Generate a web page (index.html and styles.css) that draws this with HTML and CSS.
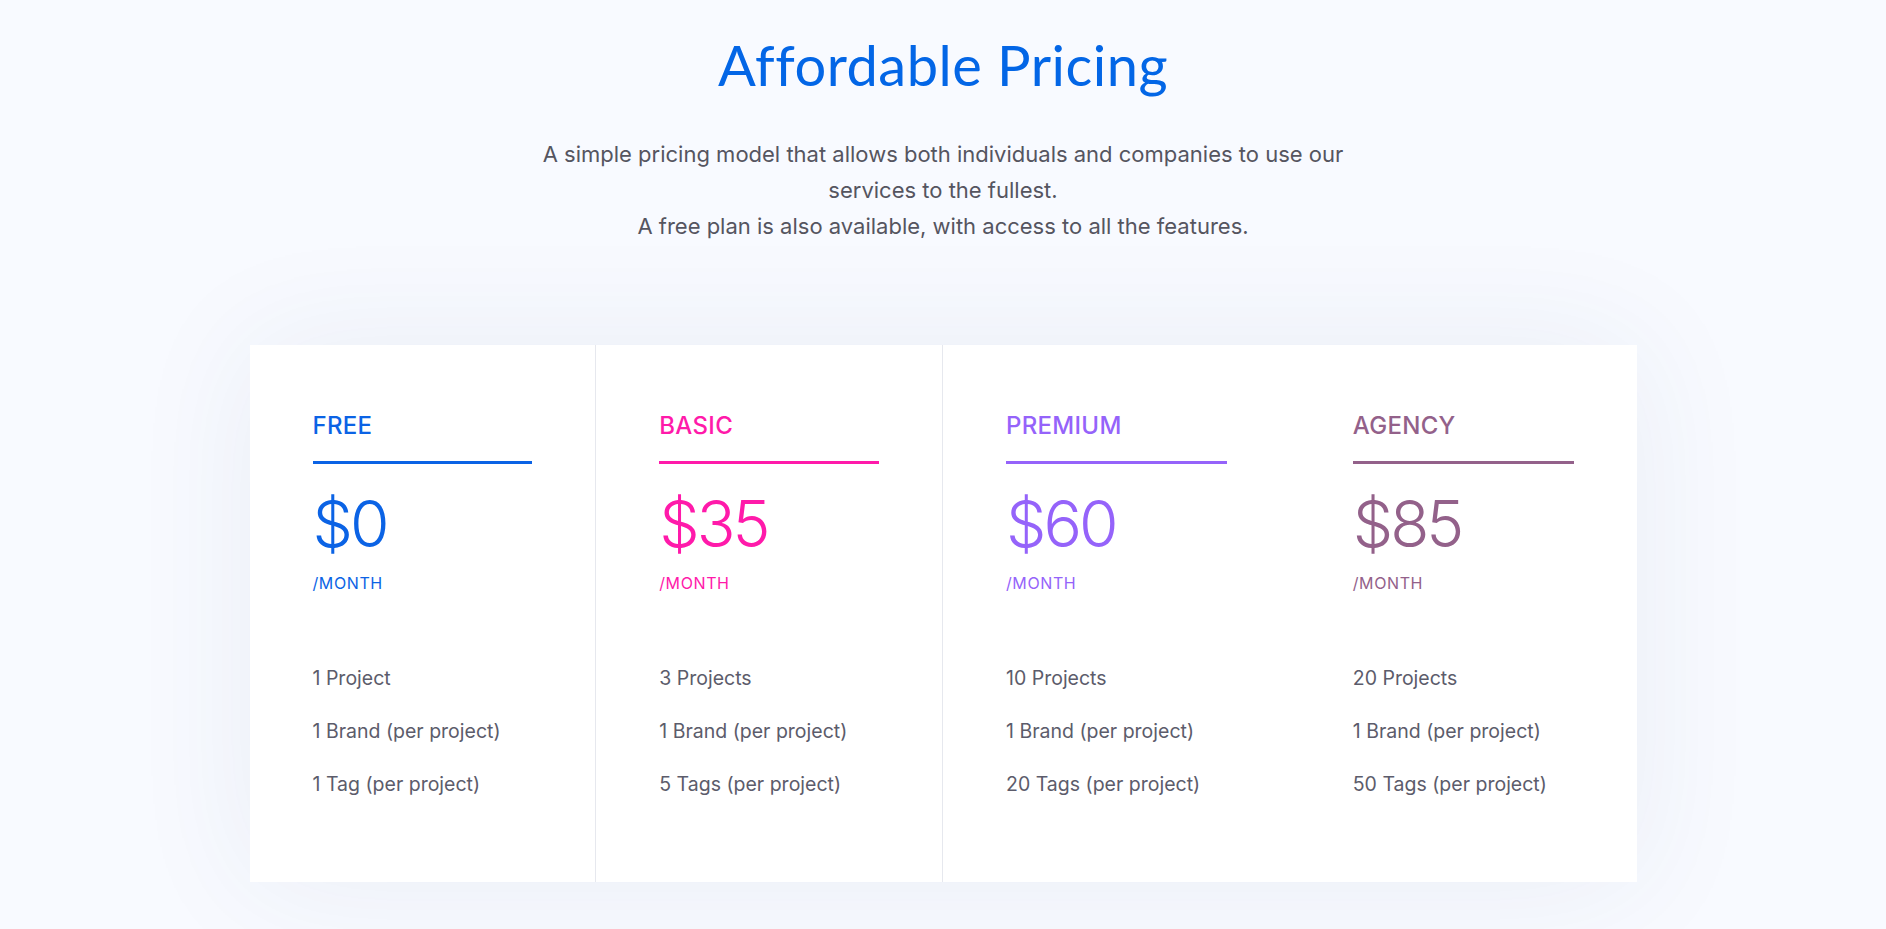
FILE: index.html
```html
<!DOCTYPE html>
<html lang="en">
<head>
<meta charset="utf-8">
<title>Affordable Pricing</title>
<link rel="stylesheet" href="styles.css">
</head>
<body>
<section class="pricing">
  <header class="intro">
    <h1 class="title">Affordable Pricing</h1>
    <p class="lead">A simple pricing model that allows both individuals and companies to use our services to the fullest.<br>A free plan is also available, with access to all the features.</p>
  </header>
  <div class="plans">
    <div class="plan plan-free">
      <h2 class="plan-name">FREE</h2>
      <div class="rule"></div>
      <div class="price">$0</div>
      <div class="period">/MONTH</div>
      <ul class="features">
        <li>1 Project</li>
        <li>1 Brand (per project)</li>
        <li>1 Tag (per project)</li>
      </ul>
    </div>
    <div class="plan plan-basic">
      <h2 class="plan-name">BASIC</h2>
      <div class="rule"></div>
      <div class="price">$35</div>
      <div class="period">/MONTH</div>
      <ul class="features">
        <li>3 Projects</li>
        <li>1 Brand (per project)</li>
        <li>5 Tags (per project)</li>
      </ul>
    </div>
    <div class="plan plan-premium">
      <h2 class="plan-name">PREMIUM</h2>
      <div class="rule"></div>
      <div class="price">$60</div>
      <div class="period">/MONTH</div>
      <ul class="features">
        <li>10 Projects</li>
        <li>1 Brand (per project)</li>
        <li>20 Tags (per project)</li>
      </ul>
    </div>
    <div class="plan plan-agency">
      <h2 class="plan-name">AGENCY</h2>
      <div class="rule"></div>
      <div class="price">$85</div>
      <div class="period">/MONTH</div>
      <ul class="features">
        <li>20 Projects</li>
        <li>1 Brand (per project)</li>
        <li>50 Tags (per project)</li>
      </ul>
    </div>
  </div>
</section>
</body>
</html>
```

FILE: styles.css
```css
* { box-sizing: border-box; }

html, body {
  margin: 0;
  background: #f8faff;
}

body {
  font-family: Inter, "Noto Sans", sans-serif;
  color: #5c5c6b;
}

.pricing {
  padding-top: 31px;
  padding-bottom: 47px;
}

.intro {
  text-align: center;
}

.title {
  margin: 0;
  font-family: Lato, "Noto Sans", sans-serif;
  font-weight: 400;
  font-size: 56px;
  line-height: 1.2;
  letter-spacing: 0.5px;
  color: #0366e6;
}

.lead {
  margin: 38px auto 0;
  max-width: 850px;
  font-size: 22px;
  line-height: 36px;
  color: #55555f;
}

.plans {
  width: 1387px;
  margin: 101px auto 0;
  display: grid;
  grid-template-columns: repeat(4, 1fr);
  background: #ffffff;
  box-shadow: 0 0 120px rgba(40, 70, 120, 0.07);
}

.plan {
  display: flex;
  flex-direction: column;
  padding: 66px 63px 83px;
}

.plan-free, .plan-basic {
  border-right: 1px solid #e6e8ee;
}

.plan-free { color: #0b63e5; }
.plan-basic { color: #ff1aaa; }
.plan-premium { color: #9563fa; }
.plan-agency { color: #93618a; }

.plan-name {
  margin: 0;
  font-size: 24px;
  line-height: 29px;
  font-weight: 500;
  letter-spacing: 0.3px;
}

.rule {
  height: 3px;
  margin-top: 21px;
  background: currentColor;
}

.price {
  margin-top: 28px;
  font-size: 64px;
  line-height: 64px;
  font-weight: 300;
  letter-spacing: -3px;
}

.period {
  margin-top: 18px;
  font-size: 16px;
  line-height: 19px;
  letter-spacing: 0.6px;
}

.features {
  list-style: none;
  margin: 71px 0 0;
  padding: 0;
  display: flex;
  flex-direction: column;
  gap: 24px;
  color: #5c5c6b;
  font-size: 19.5px;
  line-height: 29px;
}
```
